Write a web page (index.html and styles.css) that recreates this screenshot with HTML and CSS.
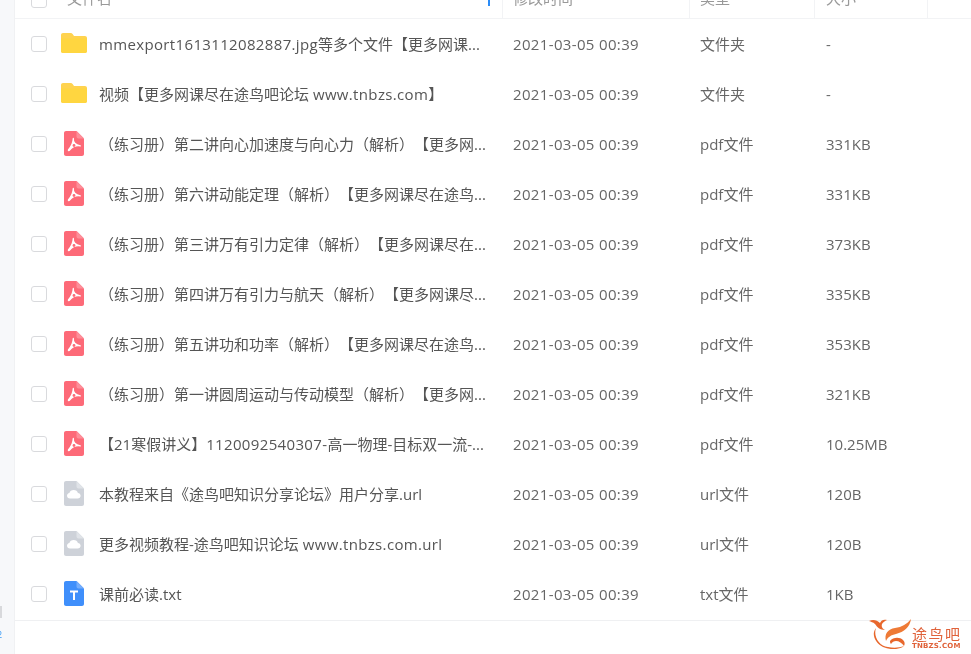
FILE: index.html
```html
<!DOCTYPE html>
<html lang="zh">
<head>
<meta charset="utf-8">
<title>文件列表</title>
<link rel="stylesheet" href="styles.css">
</head>
<body>
<svg class="defs" width="0" height="0" aria-hidden="true">
  <symbol id="folder" viewBox="0 0 26 20"><path d="M2 0h7.500c1 0 1.700.4 2.300 1.200L13 3h11c1.100 0 2 .9 2 2v13c0 1.100-.9 2-2 2H2c-1.100 0-2-.9-2-2V2C0 .9.900 0 2 0z" fill="#ffd34f"/><path d="M0 5.500h26V18c0 1.100-.9 2-2 2H2c-1.100 0-2-.9-2-2z" fill="#ffd640"/></symbol>
  <symbol id="pdf" viewBox="0 0 20 25"><path d="M2 0h10.500L20 7.500V23c0 1.100-.9 2-2 2H2c-1.100 0-2-.9-2-2V2C0 .9.900 0 2 0z" fill="#fd6a78"/><path d="M12.500 0L20 7.500h-5.500c-1.100 0-2-.9-2-2z" fill="#fe8f99"/><path d="M9.300 7.500c-.4 3.500 1.800 6.400 7 7.300-3.800-.5-8.300 1.100-10.800 4.400-.7.900-1.500.2-.9-.6 2.200-2.600 4.600-6.800 4.700-11.100z" fill="#fff" stroke="#fff" stroke-width="1.300" stroke-linejoin="round"/><circle cx="10" cy="14.500" r="1.400" fill="#fd6a78"/></symbol>
  <symbol id="url" viewBox="0 0 20 25"><path d="M2 0h10.500L20 7.500V23c0 1.100-.9 2-2 2H2c-1.100 0-2-.9-2-2V2C0 .9.900 0 2 0z" fill="#ced2d9"/><path d="M12.500 0L20 7.500h-5.500c-1.100 0-2-.9-2-2z" fill="#e0e3e8"/><path d="M6 17.500c-1.800 0-3-1.200-3-2.700 0-1.400 1-2.500 2.400-2.700.4-1.900 2.200-3.100 4.300-3.100 2.100 0 3.800 1.300 4.200 3.100 1.500.1 2.700 1.300 2.700 2.700 0 1.500-1.200 2.700-3 2.700z" fill="#fff"/></symbol>
  <symbol id="txt" viewBox="0 0 20 25"><path d="M2 0h10.500L20 7.500V23c0 1.100-.9 2-2 2H2c-1.100 0-2-.9-2-2V2C0 .9.900 0 2 0z" fill="#3f8ffb"/><path d="M12.500 0L20 7.500h-5.500c-1.100 0-2-.9-2-2z" fill="#75aefc"/><path d="M6 9.500h8v2h-3v7.500H9v-7.500H6z" fill="#fff"/></symbol>
</svg>
<div class="app">
  <aside class="side">
    <span class="side-mark"></span>
    <span class="side-num">2</span>
  </aside>
  <main class="main">
    <div class="head">
      <span class="cell c-check"><span class="box"></span></span>
      <span class="cell c-name">文件名<i class="sort"></i></span>
      <span class="cell c-time sep">修改时间</span>
      <span class="cell c-type sep">类型</span>
      <span class="cell c-size sep">大小</span>
      <span class="cell c-end sep"></span>
    </div>
    <div class="row"><span class="cell c-check"><span class="box"></span></span><svg class="ic ic-folder"><use href="#folder"/></svg><span class="cell c-title"><span class="lat">mmexport1613112082887.jpg</span>等多个文件【更多网课...</span><span class="cell c-time">2021-03-05 00:39</span><span class="cell c-type">文件夹</span><span class="cell c-size">-</span></div>
    <div class="row"><span class="cell c-check"><span class="box"></span></span><svg class="ic ic-folder"><use href="#folder"/></svg><span class="cell c-title">视频【更多网课尽在途鸟吧论坛 <span class="lat">www.tnbzs.com</span>】</span><span class="cell c-time">2021-03-05 00:39</span><span class="cell c-type">文件夹</span><span class="cell c-size">-</span></div>
    <div class="row"><span class="cell c-check"><span class="box"></span></span><svg class="ic"><use href="#pdf"/></svg><span class="cell c-title">（练习册）第二讲向心加速度与向心力（解析）【更多网...</span><span class="cell c-time">2021-03-05 00:39</span><span class="cell c-type">pdf文件</span><span class="cell c-size">331KB</span></div>
    <div class="row"><span class="cell c-check"><span class="box"></span></span><svg class="ic"><use href="#pdf"/></svg><span class="cell c-title">（练习册）第六讲动能定理（解析）【更多网课尽在途鸟...</span><span class="cell c-time">2021-03-05 00:39</span><span class="cell c-type">pdf文件</span><span class="cell c-size">331KB</span></div>
    <div class="row"><span class="cell c-check"><span class="box"></span></span><svg class="ic"><use href="#pdf"/></svg><span class="cell c-title">（练习册）第三讲万有引力定律（解析）【更多网课尽在...</span><span class="cell c-time">2021-03-05 00:39</span><span class="cell c-type">pdf文件</span><span class="cell c-size">373KB</span></div>
    <div class="row"><span class="cell c-check"><span class="box"></span></span><svg class="ic"><use href="#pdf"/></svg><span class="cell c-title">（练习册）第四讲万有引力与航天（解析）【更多网课尽...</span><span class="cell c-time">2021-03-05 00:39</span><span class="cell c-type">pdf文件</span><span class="cell c-size">335KB</span></div>
    <div class="row"><span class="cell c-check"><span class="box"></span></span><svg class="ic"><use href="#pdf"/></svg><span class="cell c-title">（练习册）第五讲功和功率（解析）【更多网课尽在途鸟...</span><span class="cell c-time">2021-03-05 00:39</span><span class="cell c-type">pdf文件</span><span class="cell c-size">353KB</span></div>
    <div class="row"><span class="cell c-check"><span class="box"></span></span><svg class="ic"><use href="#pdf"/></svg><span class="cell c-title">（练习册）第一讲圆周运动与传动模型（解析）【更多网...</span><span class="cell c-time">2021-03-05 00:39</span><span class="cell c-type">pdf文件</span><span class="cell c-size">321KB</span></div>
    <div class="row"><span class="cell c-check"><span class="box"></span></span><svg class="ic"><use href="#pdf"/></svg><span class="cell c-title">【21寒假讲义】<span class="lat">1120092540307-</span>高一物理-目标双一流-...</span><span class="cell c-time">2021-03-05 00:39</span><span class="cell c-type">pdf文件</span><span class="cell c-size">10.25MB</span></div>
    <div class="row"><span class="cell c-check"><span class="box"></span></span><svg class="ic"><use href="#url"/></svg><span class="cell c-title">本教程来自《途鸟吧知识分享论坛》用户分享.url</span><span class="cell c-time">2021-03-05 00:39</span><span class="cell c-type">url文件</span><span class="cell c-size">120B</span></div>
    <div class="row"><span class="cell c-check"><span class="box"></span></span><svg class="ic"><use href="#url"/></svg><span class="cell c-title">更多视频教程-途鸟吧知识论坛 <span class="lat">www.tnbzs.com.url</span></span><span class="cell c-time">2021-03-05 00:39</span><span class="cell c-type">url文件</span><span class="cell c-size">120B</span></div>
    <div class="row"><span class="cell c-check"><span class="box"></span></span><svg class="ic"><use href="#txt"/></svg><span class="cell c-title">课前必读.txt</span><span class="cell c-time">2021-03-05 00:39</span><span class="cell c-type">txt文件</span><span class="cell c-size">1KB</span></div>
    <div class="foot"></div>
  </main>
</div>
<div class="logo">
  <svg class="logo-mark" viewBox="0 0 43 31"><path d="M1 3C5 1 9 2 12 5 13 2 16 1 19 2 17 3 15 4 14 6 13 9 15 11 17 12 12 12 9 9 7 6 5 4 3 4 1 3z" fill="#e8672c"/><path d="M8 10C5 18 11 28 20 29 25 30 31 30 36 28 31 32 22 32 15 29 7 25 3 16 8 10z" fill="#e8672c"/><path d="M43 1C42 9 36 14 28 16 23 17 20 19 18 23 16 16 20 11 27 10 34 9 39 6 43 1z" fill="#ee7a36"/><path d="M22 23C25 19 32 19 35 22 37 24 37 26 36 28 34 25 31 23 28 23 26 23 24 24 23 26 22 25 22 24 22 23z" fill="#e8672c"/></svg>
  <div class="logo-text"><span class="logo-cn">途鸟吧</span><span class="logo-en">TNBZS.COM</span></div>
</div>
</body>
</html>
```
FILE: styles.css
```css
* { box-sizing: border-box; }
html, body { margin: 0; height: 100%; overflow: hidden; background: #fff; }
body {
  font-family: "Open Sans", "Noto Sans CJK SC", sans-serif;
  font-size: 15px;
  color: #666;
  position: relative;
  text-spacing-trim: space-all;
  font-feature-settings: "palt" 0;
}
.defs { position: absolute; }
.app { display: flex; height: 654px; filter: blur(0.35px); }
.side {
  width: 15px;
  flex: none;
  background: #f7f8fa;
  border-right: 1px solid #f0f1f3;
  display: flex;
  flex-direction: column;
  padding-top: 606px;
}
.side-mark { width: 2px; height: 12px; background: #d8d9dc; }
.side-num { font-size: 9px; line-height: 12px; color: #3b9bf5; margin-top: 11px; margin-left: -3px; }
.main { flex: 1; min-width: 0; margin-top: -18px; }
.head {
  display: flex;
  align-items: center;
  height: 37px;
  border-bottom: 1px solid #f2f3f5;
  color: #999;
}
.cell { display: block; white-space: nowrap; }
.c-check { width: 46px; flex: none; padding-left: 16px; display: flex; }
.box { display: block; width: 16px; height: 16px; border: 1px solid #d9dadd; border-radius: 3px; background: #fff; }
.c-name { width: 441px; flex: none; padding-left: 6px; position: relative; height: 100%; line-height: 32px; }
.sort { position: absolute; right: 12px; top: 18px; width: 2px; height: 6px; background: #2b8cf7; }
.head .sep { border-left: 1px solid #f2f3f5; height: 100%; line-height: 32px; }
.c-title { width: 403px; flex: none; overflow: hidden; margin-left: 12px; color: #555; }
.lat { letter-spacing: 0.35px; }
.c-time { width: 187px; flex: none; padding-left: 10px; }
.c-type { width: 125px; flex: none; padding-left: 10px; }
.c-size { width: 113px; flex: none; padding-left: 11px; }
.c-end { flex: 1; }
.row { display: flex; align-items: center; height: 50px; line-height: 48px; }
.row .c-time { padding-left: 11px; letter-spacing: 0.35px; }
.row .c-type { padding-left: 11px; }
.row .c-size { padding-left: 12px; }
.ic { width: 20px; height: 25px; flex: none; margin: 0 3px 1px; }
.ic-folder { width: 26px; height: 20px; margin: 0 0 2px; }
.foot { border-top: 1px solid #eff0f2; margin-top: 1px; height: 40px; }
.logo { position: absolute; left: 868px; top: 618px; display: flex; align-items: flex-start; gap: 1px; filter: blur(0.3px); }
.logo-mark { width: 43px; height: 31px; display: block; flex: none; }
.logo-text { display: flex; flex-direction: column; color: #e0623a; line-height: 1; margin-top: 8px; width: 50px; }
.logo-cn { font-family: "Noto Sans CJK SC", sans-serif; font-size: 15px; letter-spacing: 1.500px; line-height: 16px; }
.logo-en { font-size: 7px; font-family: "DejaVu Sans", sans-serif; font-weight: bold; letter-spacing: 0.2px; line-height: 8px; }
```
